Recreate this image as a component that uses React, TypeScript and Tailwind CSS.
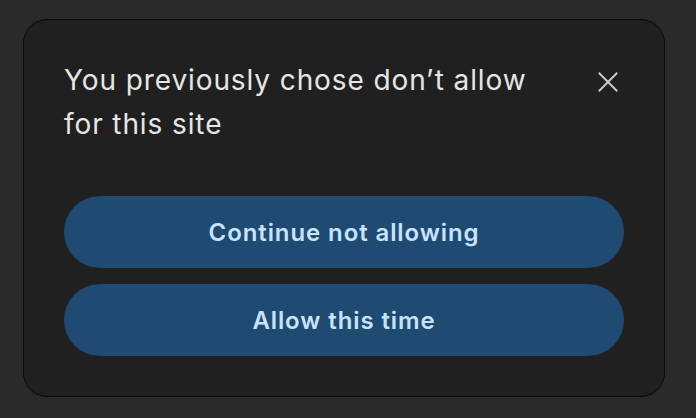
export default function App() {
  return (
    <div className="h-[418px] w-[696px] bg-[#2a2a2a] pl-[23px] pt-[19px] font-['Inter',sans-serif]">
      <div className="w-[642px] rounded-[24px] border border-[#0b0b0b] bg-[#202020] px-10 pb-10 pt-[38px]">
        <div className="flex items-start justify-between">
          <h1 className="max-w-[490px] text-[28px] font-normal leading-[44px] tracking-[0.9px] text-[#e6e6e6]">
            You previously chose don’t allow for this site
          </h1>
          <button className="mr-1 mt-3 flex h-6 w-6 items-center justify-center text-[#c9c9c9]" aria-label="Close">
            <svg width="20" height="20" viewBox="0 0 20 20" fill="none" stroke="currentColor" strokeWidth="2" strokeLinecap="square">
              <path d="M1.5 1.5 L18.5 18.5 M18.5 1.5 L1.5 18.5" />
            </svg>
          </button>
        </div>
        <div className="mt-[50px] flex flex-col gap-4">
          <button className="h-[72px] w-full rounded-full bg-[#1f4a72] pt-px text-[24px] font-semibold tracking-[0.9px] text-[#c8e3ff]">
            Continue not allowing
          </button>
          <button className="h-[72px] w-full rounded-full bg-[#1f4a72] pt-px text-[24px] font-semibold tracking-[0.9px] text-[#c8e3ff]">
            Allow this time
          </button>
        </div>
      </div>
    </div>
  );
}
